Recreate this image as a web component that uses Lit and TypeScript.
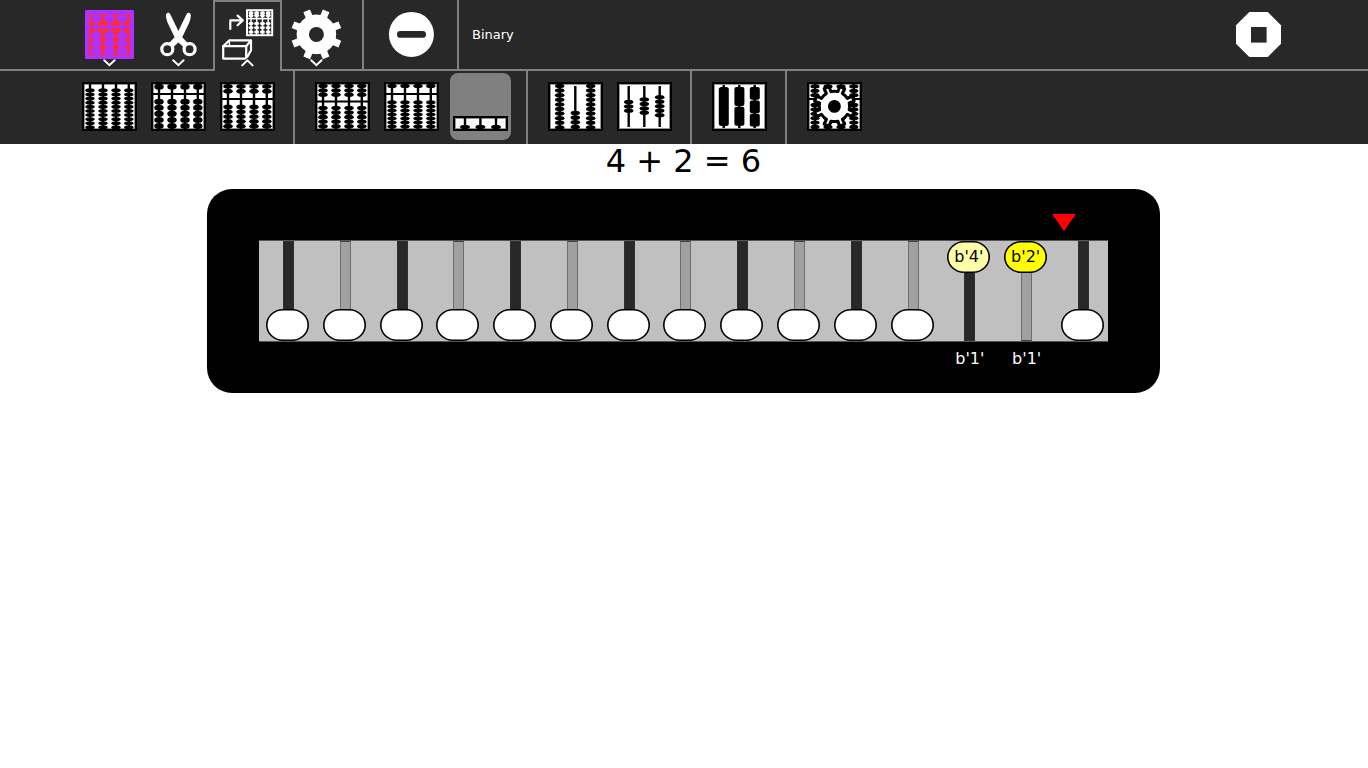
import { LitElement, html, svg, css } from "lit";
import { customElement, state } from "lit/decorators.js";

const range = (from: number, to: number, count: number) =>
  Array.from({ length: count }, (_, i) => from + ((to - from) * i) / Math.max(1, count - 1));

const gearPath = (c: number, tip: number, root: number, tipHalf: number, rootHalf: number) => {
  const at = (r: number, deg: number) => {
    const a = (deg * Math.PI) / 180;
    return `${(c + r * Math.cos(a)).toFixed(2)} ${(c + r * Math.sin(a)).toFixed(2)}`;
  };
  let d = "";
  for (let i = 0; i < 8; i++) {
    const mid = 22.5 + i * 45;
    d += `${i ? "L" : "M"}${at(root, mid - rootHalf)}L${at(tip, mid - tipHalf)}L${at(tip, mid + tipHalf)}L${at(root, mid + rootHalf)}`;
    d += `A${root} ${root} 0 0 1 ${at(root, mid + 45 - rootHalf)}`;
  }
  return d + "Z";
};

// Each bead is a flattened lens: flat top and bottom, tapering to its sides.
const beads = (xs: number[], ys: number[], rx: number, ry: number) =>
  xs.map((x) => ys.map((y) => svg`<path d="M${x - 2.4} ${y - ry}H${x + 2.4}Q${x + rx} ${y - ry * 0.7} ${x + rx} ${y}Q${x + rx} ${y + ry * 0.7} ${x + 2.4} ${y + ry}H${x - 2.4}Q${x - rx} ${y + ry * 0.7} ${x - rx} ${y}Q${x - rx} ${y - ry * 0.7} ${x - 2.4} ${y - ry}Z"/>`));
const rods = (xs: number[], y1: number, y2: number, w = 2.4) =>
  xs.map((x) => svg`<path d="M${x} ${y1}V${y2}" stroke="#000" stroke-width=${w}/>`);

const frame = (top = 10) => svg`
  <rect x="8" y=${top + 1} width="53" height=${57 - top} fill="#fff" stroke="#000" stroke-width="2"/>
  <rect x="9.5" y=${top + 2.5} width="50" height=${54 - top} fill="none" stroke="#999" stroke-width="1"/>`;

const four = [15, 28, 41, 53.8];
const three = [18.7, 34.3, 49.7];

const classic = (upper: number[], bar: number, lower: number[], upperRy: number, lowerRy: number) => svg`
  ${frame()}${rods(four, 12, 57)}
  ${bar ? svg`<path d="M8 ${bar}H61" stroke="#000" stroke-width="2"/>` : null}
  ${beads(four, upper, 4.8, upperRy)}${beads(four, lower, 4.8, lowerRy)}`;

const modes = {
  decimal: classic([], 0, range(18.4, 55.4, 10), 2, 1.8),
  japanese: classic([14.7], 22, range(29.7, 54, 5), 2.8, 2.8),
  chinese: classic([14.4, 19.2], 27, range(35, 54.3, 5), 2.2, 2.2),
  mayan: classic([14, 18.4, 22.7], 29.6, range(36, 54.3, 5), 2, 2.1),
  hexadecimal: classic([14], 22, range(30.4, 54.6, 7), 1.9, 1.8),
  binary: svg`${frame(44)}${rods([19, 34.4, 50], 45, 57)}${beads([19, 34.4, 50], [55], 5, 2)}`,
  russian: svg`${frame()}${rods(three, 14, 57)}
    ${beads([18.7, 49.7], range(14, 55.4, 10), 4.8, 2)}${beads([34.3], range(41, 55, 4), 4.8, 2.1)}`,
  fraction: svg`${frame()}${rods(three, 14, 55)}
    ${beads([18.7], [30, 34.4, 38.8], 4.8, 2)}
    ${beads([34.3], [27.6, 32, 36.4, 40.8], 4.8, 2)}
    ${beads([49.7], [25.3, 29.7, 34.2, 38.7, 43.2], 4.8, 2)}`,
  rodset: svg`${frame()}${rods(three, 13, 56)}
    <rect x="13.8" y="15" width="10" height="39" rx="2.5"/>
    <rect x="29.4" y="15" width="10" height="19" rx="2"/><rect x="29.4" y="34.8" width="10" height="19" rx="2"/>
    <rect x="44.8" y="15" width="10" height="12.8" rx="2"/><rect x="44.8" y="28.4" width="10" height="12.8" rx="2"/><rect x="44.8" y="41.8" width="10" height="12.8" rx="2"/>`,
  custom: svg`${frame()}${rods(four, 12, 57)}<path d="M8 27H61" stroke="#000" stroke-width="2"/>
    ${beads(four, [14.4, 18.8, 23.2], 4.6, 1.9)}${beads(four, [33, 37.4, 41.8, 46.2, 50.6, 55], 4.6, 1.9)}
    <path d=${gearPath(34.4, 20.5, 15.2, 7.5, 9)} fill="#fff" stroke="#000" stroke-width="3" stroke-linejoin="round"/>
    <circle cx="34.4" cy="34.4" r="6.4"/>`,
};

const chevronDown = svg`<path d="M29.2 60.2L34.4 65.2L39.6 60.2" fill="none" stroke="#282828" stroke-width="4"/>
  <path d="M29.2 60.2L34.4 65.2L39.6 60.2" fill="none" stroke="#fff" stroke-width="2" stroke-linecap="round"/>`;

const tools = {
  abacus: svg`<rect x="10" y="10" width="49" height="49" rx="1.5" fill="#ac32ff"/>
    <rect x="14.2" y="14.2" width="40.6" height="41" fill="#ff2b34"/>
    <g fill="#ac32ff"><rect x="14" y="25.6" width="41" height="2.6"/>
    ${[21.3, 34.4, 47.3].map((x) => svg`<rect x=${x - 1.3} y="14" width="2.6" height="41"/>
      ${[18.2, 35.8, 43.4, 51.2].map((y) => svg`<ellipse cx=${x} cy=${y} rx="5.4" ry="3.9"/>`)}`)}</g>
    ${chevronDown}`,
  scissors: svg`<path fill="#fff" d="M22 16C21.8 12.6 25 11.6 26.4 14.4L34.4 31L42.4 14.4C43.8 11.6 47 12.6 46.8 16C46.6 19 45.8 21.4 44.6 24L38.2 37.2L44.2 43.6L40 47.6L34.4 42.4L28.8 47.6L24.6 43.6L30.6 37.2L24.2 24C23 21.4 22.2 19 22 16Z"/>
    <g fill="none" stroke="#fff" stroke-width="3.2"><circle cx="23.3" cy="49.2" r="5.5"/><circle cx="45.6" cy="49.2" r="5.5"/></g>
    ${chevronDown}`,
  choose: svg`<g fill="none" stroke="#fff" stroke-width="2.2" stroke-linecap="round" stroke-linejoin="round">
      <path d="M17.3 29V20.4H29.4M24.6 15.6L29.8 20.4L24.6 25.2"/>
      <rect x="10.2" y="46.2" width="23" height="12.4"/>
      <path d="M10.2 46.2L16.4 40.4H38V50.4L33.2 58.6M33.2 46.2L38 40.4"/>
      <path d="M16.4 40.4V46" stroke-width="1.4"/>
    </g>
    <rect x="34" y="10.2" width="25.2" height="25" fill="none" stroke="#fff" stroke-width="2"/>
    <g fill="#fff"><rect x="34" y="17.8" width="25" height="1.6"/>
    ${[38, 43.7, 49.5, 55.2].map((x) => svg`<rect x=${x - 0.7} y="10" width="1.4" height="25"/>
      ${[13, 15.6, 23.6, 27.8, 32].map((y) => svg`<ellipse cx=${x} cy=${y} rx="2.5" ry="1.8"/>`)}`)}</g>
    <path d="M29.2 65.4L34.4 60.4L39.6 65.4" fill="none" stroke="#282828" stroke-width="4"/>
    <path d="M29.2 65.4L34.4 60.4L39.6 65.4" fill="none" stroke="#fff" stroke-width="2" stroke-linecap="round"/>`,
  settings: svg`<path fill="#fff" d=${gearPath(34.4, 25.6, 19.8, 8, 10.5)} />
    <circle cx="34.4" cy="34.4" r="7.5" fill="#282828"/>${chevronDown}`,
  clear: svg`<circle cx="34.4" cy="34.4" r="22.5" fill="#fff"/><rect x="20" y="31" width="29" height="6.8" rx="3.4" fill="#282828"/>`,
  stop: svg`<path d="M25.3 12H43.8L57 25.3V43.8L43.8 57H25.3L12 43.8V25.3Z" fill="#fff"/><rect x="27" y="27" width="15.6" height="15.6" fill="#282828"/>`,
};

interface Rod { active?: boolean; text?: string; fill?: string; count?: string }

@customElement("abacus-rod")
class AbacusRod extends LitElement {
  static properties = { rod: { attribute: false }, dark: { type: Boolean } };
  declare rod: Rod;
  declare dark: boolean;
  static styles = css`
    :host { display: block; width: 43px; }
    .slot { display: grid; height: 100px; grid-template-columns: 100%; }
    .pole, .bead { grid-area: 1 / 1; }
    .pole { box-sizing: border-box; width: 11px; margin-left: 17px; background: #a0a0a0; border: 1px solid #6e6e6e; border-top-color: #404040; border-bottom-color: #404040; }
    .dark { background: #282828; border-color: #303030; }
    .bead { display: grid; place-items: center; align-self: end; width: 43px; height: 32px; padding: 0; border: 0; background: none; font: 16px/20px "DejaVu Sans", sans-serif; color: #000; }
    .up { align-self: start; }
    .bead svg, .bead span { grid-area: 1 / 1; }
    .bead svg { display: block; }
  `;
  render() {
    const { active, text = "", fill = "#fff" } = this.rod;
    return html`<div class="slot">
      <div class="pole ${this.dark ? "dark" : ""}"></div>
      <button class="bead ${active ? "up" : ""}" aria-label=${text || "bead"}>
        <svg width="43" height="32" viewBox="0 0 43 32"><rect x="0.8" y="0.8" width="41.4" height="30.4" rx="16" ry="15.2" fill=${fill} stroke="#000" stroke-width="1.6"/></svg>
        <span>${text}</span>
      </button>
    </div>`;
  }
}

@customElement("app-root")
class AppRoot extends LitElement {
  @state() private mode = "binary";
  @state() private rodList: Rod[] = [
    ...Array.from({ length: 12 }, () => ({})),
    { active: true, text: "b'4'", fill: "#ffffaa", count: "b'1'" },
    { active: true, text: "b'2'", fill: "#ffff00", count: "b'1'" },
    {},
  ];

  static styles = css`
    :host { display: block; min-height: 100vh; background: #fff; font-family: "DejaVu Sans", sans-serif; }
    .bar { display: flex; padding: 0 75px; background: #282828; }
    .main { height: 69px; border-bottom: 2px solid #808080; }
    .sub { height: 73px; }
    .tool { box-sizing: border-box; flex: none; width: 69px; height: 69px; padding: 0; border: 0; background: none; display: grid; place-items: center; }
    .tool svg { display: block; }
    .tool.open { height: 71px; padding-bottom: 2px; background: #282828; box-shadow: inset 2px 2px #808080, inset -2px 0 #808080; }
    .sub .tool { margin-top: 1px; }
    .plate { display: grid; place-items: center; width: 61px; height: 67px; border-radius: 8px; background: #808080; }
    .rule { flex: none; width: 2px; margin: 0 13px 0 11px; background: #808080; }
    .name { align-self: center; margin: 0; font-size: 13px; line-height: 16px; color: #fff; }
    .spacer { flex: 1; }
    .sum { margin: 0; text-align: center; font-size: 32px; line-height: 34px; font-weight: 400; }
    main { padding: 0 25px 0 24px; }
    .board { box-sizing: border-box; max-width: 953px; margin: 11px auto 0; padding: 0 52px; border-radius: 25px; background: #000; }
    .marker { display: flex; justify-content: flex-end; padding: 25px 32px 9px 0; }
    .marker svg { display: block; }
    .frame { display: flex; justify-content: space-between; padding: 0 4px 0 7px; background: #c0c0c0; border: solid #555; border-width: 1px 0; }
    .counts { display: flex; justify-content: space-between; padding: 7px 3px 24px 8px; min-height: 20px; font-size: 16px; line-height: 20px; color: #fff; }
    .count { width: 43px; text-align: center; }
  `;

  private tool(label: string, art: unknown, cls = "") {
    return html`<button class="tool ${cls}" aria-label=${label}><svg width="69" height="69" viewBox="0 0 69 69">${art}</svg></button>`;
  }
  private pick(key: keyof typeof modes) {
    const on = this.mode === key;
    const art = html`<svg width=${on ? 61 : 69} height=${on ? 67 : 69} viewBox=${on ? "4 1 61 67" : "0 0 69 69"}>${modes[key]}</svg>`;
    return html`<button class="tool" aria-label=${key} aria-pressed=${on} @click=${() => (this.mode = key)}>
      ${on ? html`<span class="plate">${art}</span>` : art}</button>`;
  }

  render() {
    const rule = html`<div class="rule"></div>`;
    return html`
      <div class="bar main">
        ${this.tool("Abacus", tools.abacus)}${this.tool("Edit", tools.scissors)}
        ${this.tool("Choose abacus", tools.choose, "open")}${this.tool("Settings", tools.settings)}
        ${rule}${this.tool("Clear", tools.clear)}${rule}
        <p class="name">Binary</p>
        <div class="spacer"></div>
        ${this.tool("Stop", tools.stop)}
      </div>
      <div class="bar sub">
        ${this.pick("decimal")}${this.pick("japanese")}${this.pick("chinese")}${rule}
        ${this.pick("mayan")}${this.pick("hexadecimal")}${this.pick("binary")}${rule}
        ${this.pick("russian")}${this.pick("fraction")}${rule}
        ${this.pick("rodset")}${rule}${this.pick("custom")}
      </div>
      <main>
        <h1 class="sum">4 + 2 = 6</h1>
        <div class="board">
          <div class="marker"><svg width="24" height="17" viewBox="0 0 24 17"><path d="M0 0H24L12 17Z" fill="#f00"/></svg></div>
          <div class="frame">${this.rodList.map((r, i) => html`<abacus-rod .rod=${r} ?dark=${i % 2 === 0}></abacus-rod>`)}</div>
          <div class="counts">${this.rodList.map((r) => html`<span class="count">${r.count ?? ""}</span>`)}</div>
        </div>
      </main>`;
  }
}
